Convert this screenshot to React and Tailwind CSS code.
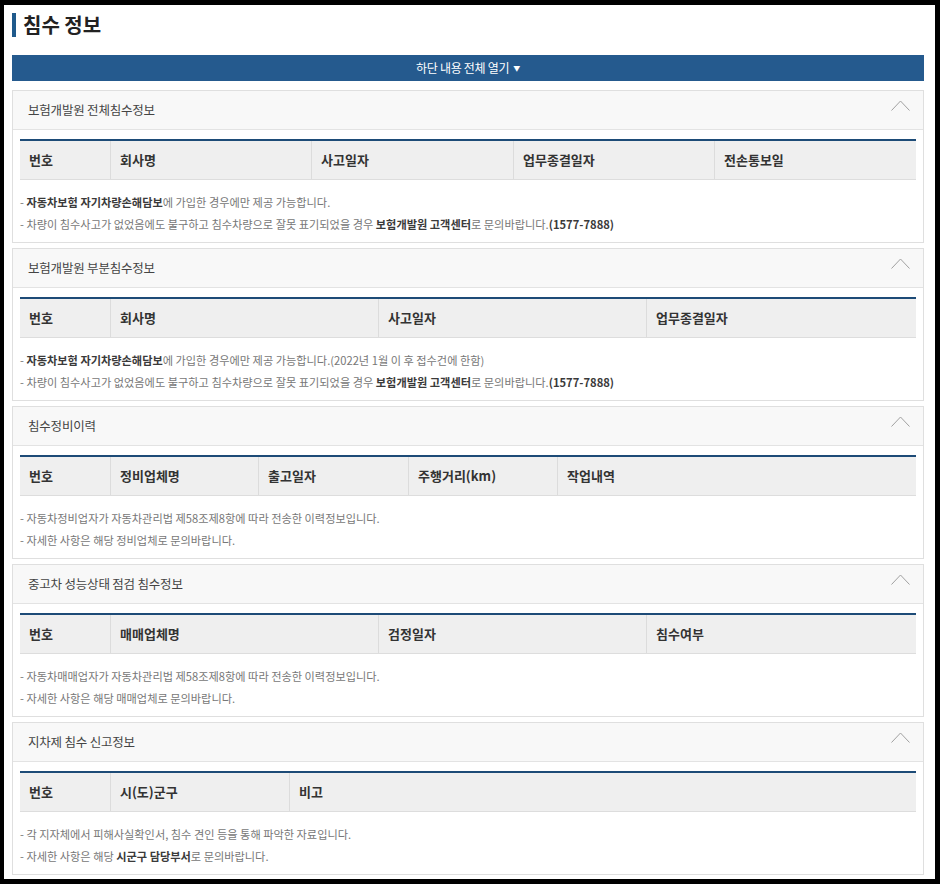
const font = { fontFamily: '"Noto Sans CJK KR", "Noto Sans", sans-serif' };

const sections = [
  {
    title: '보험개발원 전체침수정보',
    cols: [
      ['번호', 90],
      ['회사명', 201],
      ['사고일자', 202],
      ['업무종결일자', 201],
      ['전손통보일', 202],
    ],
    notes: [
      [['b', '자동차보험 자기차량손해담보'], ['t', '에 가입한 경우에만 제공 가능합니다.']],
      [
        ['t', '차량이 침수사고가 없었음에도 불구하고 침수차량으로 잘못 표기되었을 경우 '],
        ['b', '보험개발원 고객센터'],
        ['t', '로 문의바랍니다.'],
        ['b', '(1577-7888)'],
      ],
    ],
  },
  {
    title: '보험개발원 부분침수정보',
    cols: [
      ['번호', 90],
      ['회사명', 268],
      ['사고일자', 268],
      ['업무종결일자', 270],
    ],
    notes: [
      [
        ['b', '자동차보험 자기차량손해담보'],
        ['t', '에 가입한 경우에만 제공 가능합니다.(2022년 1월 이 후 접수건에 한함)'],
      ],
      [
        ['t', '차량이 침수사고가 없었음에도 불구하고 침수차량으로 잘못 표기되었을 경우 '],
        ['b', '보험개발원 고객센터'],
        ['t', '로 문의바랍니다.'],
        ['b', '(1577-7888)'],
      ],
    ],
  },
  {
    title: '침수정비이력',
    cols: [
      ['번호', 90],
      ['정비업체명', 148],
      ['출고일자', 150],
      ['주행거리(km)', 149],
      ['작업내역', 359],
    ],
    notes: [
      [['t', '자동차정비업자가 자동차관리법 제58조제8항에 따라 전송한 이력정보입니다.']],
      [['t', '자세한 사항은 해당 정비업체로 문의바랍니다.']],
    ],
  },
  {
    title: '중고차 성능상태 점검 침수정보',
    cols: [
      ['번호', 90],
      ['매매업체명', 268],
      ['검정일자', 268],
      ['침수여부', 270],
    ],
    notes: [
      [['t', '자동차매매업자가 자동차관리법 제58조제8항에 따라 전송한 이력정보입니다.']],
      [['t', '자세한 사항은 해당 매매업체로 문의바랍니다.']],
    ],
  },
  {
    title: '지차제 침수 신고정보',
    cols: [
      ['번호', 90],
      ['시(도)군구', 179],
      ['비고', 627],
    ],
    notes: [
      [['t', '각 지자체에서 피해사실확인서, 침수 견인 등을 통해 파악한 자료입니다.']],
      [['t', '자세한 사항은 해당 '], ['b', '시군구 담당부서'], ['t', '로 문의바랍니다.']],
    ],
  },
];

const ChevronUp = () => (
  <svg width="19" height="11" viewBox="0 0 19 11" fill="none">
    <polyline points="0.5,10.5 9.5,1 18.5,10.5" stroke="#a0a0a0" strokeWidth="1" />
  </svg>
);

const Section = ({ title, cols, notes }) => (
  <section className="border border-[#dfdfdf] bg-white">
    <div className="h-[39px] bg-[#f8f8f8] border-b border-[#e3e3e3] flex items-center justify-between pl-[15px] pr-[13px]">
      <span className="text-[12.5px] tracking-[-0.2px] text-[#444]">{title}</span>
      <span className="-mt-[10px]">
        <ChevronUp />
      </span>
    </div>
    <div className="px-[7px] pt-[9px] pb-[7px]">
      {/* header-only table */}
      <div className="flex h-[41px] bg-[#efefef] border-t-2 border-t-[#1d4b77] border-b border-b-[#dddddd]">
        {cols.map(([label, w], i) => (
          <div
            key={label}
            style={{ width: w }}
            className={`flex items-center shrink-0 pl-[9px] font-bold text-[13px] text-[#333] ${
              i > 0 ? 'border-l border-[#dcdcdc]' : ''
            }`}
          >
            {label}
          </div>
        ))}
      </div>
      <div className="mt-[11px]">
        {notes.map((line, i) => (
          <p key={i} className="h-[22px] leading-[22px] text-[11.2px] text-[#777] whitespace-nowrap">
            {'- '}
            {line.map(([kind, txt], j) =>
              kind === 'b' ? (
                <b key={j} className="font-bold text-[#3a3a3a]">
                  {txt}
                </b>
              ) : (
                <span key={j}>{txt}</span>
              )
            )}
          </p>
        ))}
      </div>
    </div>
  </section>
);

export default function App() {
  return (
    <div className="w-[940px] h-[884px] bg-black pt-[5px] pl-[4px] pr-[5px] pb-[5px]" style={font}>
      <div className="h-full bg-white pl-[8px] pr-[11px] overflow-hidden">
        <div className="pt-[8px] flex items-center h-[32px]">
          <div className="w-[4px] h-[24px] bg-[#1f5a8c]" />
          <h1 className="ml-[7px] text-[20px] font-bold text-[#222]">침수 정보</h1>
        </div>
        <button className="mt-[18px] w-full h-[26px] bg-[#255a8e] text-white text-[12px] tracking-[-0.3px] flex items-center justify-center">
          하단 내용 전체 열기
          <span className="ml-[4px] text-[7px]">▼</span>
        </button>
        <div className="mt-[9px] flex flex-col gap-[5px]">
          {sections.map((s) => (
            <Section key={s.title} {...s} />
          ))}
        </div>
      </div>
    </div>
  );
}
